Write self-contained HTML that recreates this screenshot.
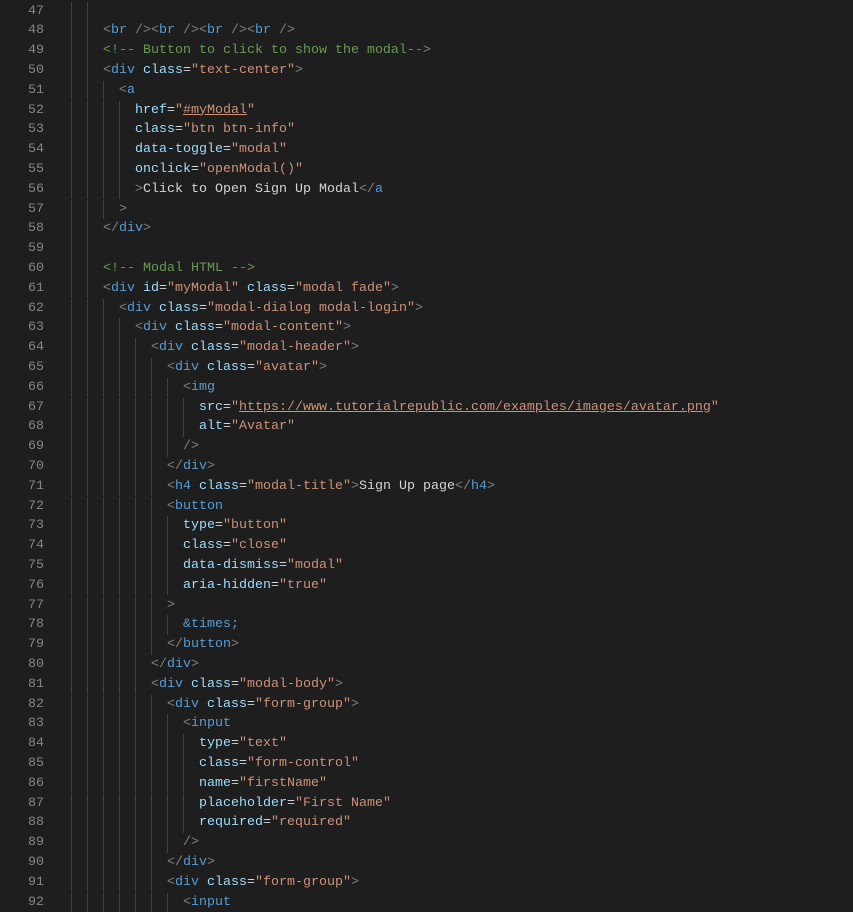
<!DOCTYPE html>
<html><head><meta charset="utf-8"><style>
body{margin:0;background:#1e1e1e;width:853px;height:912px;overflow:hidden;font-family:"Liberation Mono",monospace;font-size:13.33px}
#w{position:absolute;left:0;top:1.5px;width:853px}
.l{position:absolute;left:0;height:19.8px;line-height:19.8px;white-space:pre;width:853px}
.n{position:absolute;right:809px;color:#858585;text-align:right}
.c{position:absolute;left:71px;color:#d4d4d4}
.g{display:inline-block;height:19.8px;vertical-align:top;background:repeating-linear-gradient(to right,#404040 0 1px,transparent 1px 16px)}
.p{color:#808080}.t{color:#569cd6}.a{color:#9cdcfe}.s{color:#ce9178}.m{color:#6a9955}.u{text-decoration:underline}
</style></head><body><div id="w">
<div class="l" style="top:0px"><span class="n">47</span><span class="c"><span class="g" style="width:32px"></span></span></div>
<div class="l" style="top:19.8px"><span class="n">48</span><span class="c"><span class="g" style="width:32px"></span><span class="p">&lt;</span><span class="t">br</span> <span class="p">/&gt;&lt;</span><span class="t">br</span> <span class="p">/&gt;&lt;</span><span class="t">br</span> <span class="p">/&gt;&lt;</span><span class="t">br</span> <span class="p">/&gt;</span></span></div>
<div class="l" style="top:39.6px"><span class="n">49</span><span class="c"><span class="g" style="width:32px"></span><span class="m">&lt;!-- Button to click to show the modal--&gt;</span></span></div>
<div class="l" style="top:59.4px"><span class="n">50</span><span class="c"><span class="g" style="width:32px"></span><span class="p">&lt;</span><span class="t">div</span> <span class="a">class</span>=<span class="s">"text-center"</span><span class="p">&gt;</span></span></div>
<div class="l" style="top:79.2px"><span class="n">51</span><span class="c"><span class="g" style="width:48px"></span><span class="p">&lt;</span><span class="t">a</span></span></div>
<div class="l" style="top:99px"><span class="n">52</span><span class="c"><span class="g" style="width:64px"></span><span class="a">href</span>=<span class="s">"<span class="u">#myModal</span>"</span></span></div>
<div class="l" style="top:118.8px"><span class="n">53</span><span class="c"><span class="g" style="width:64px"></span><span class="a">class</span>=<span class="s">"btn btn-info"</span></span></div>
<div class="l" style="top:138.6px"><span class="n">54</span><span class="c"><span class="g" style="width:64px"></span><span class="a">data-toggle</span>=<span class="s">"modal"</span></span></div>
<div class="l" style="top:158.4px"><span class="n">55</span><span class="c"><span class="g" style="width:64px"></span><span class="a">onclick</span>=<span class="s">"openModal()"</span></span></div>
<div class="l" style="top:178.2px"><span class="n">56</span><span class="c"><span class="g" style="width:64px"></span><span class="p">&gt;</span>Click to Open Sign Up Modal<span class="p">&lt;/</span><span class="t">a</span></span></div>
<div class="l" style="top:198px"><span class="n">57</span><span class="c"><span class="g" style="width:48px"></span><span class="p">&gt;</span></span></div>
<div class="l" style="top:217.8px"><span class="n">58</span><span class="c"><span class="g" style="width:32px"></span><span class="p">&lt;/</span><span class="t">div</span><span class="p">&gt;</span></span></div>
<div class="l" style="top:237.6px"><span class="n">59</span><span class="c"><span class="g" style="width:32px"></span></span></div>
<div class="l" style="top:257.4px"><span class="n">60</span><span class="c"><span class="g" style="width:32px"></span><span class="m">&lt;!-- Modal HTML --&gt;</span></span></div>
<div class="l" style="top:277.2px"><span class="n">61</span><span class="c"><span class="g" style="width:32px"></span><span class="p">&lt;</span><span class="t">div</span> <span class="a">id</span>=<span class="s">"myModal"</span> <span class="a">class</span>=<span class="s">"modal fade"</span><span class="p">&gt;</span></span></div>
<div class="l" style="top:297px"><span class="n">62</span><span class="c"><span class="g" style="width:48px"></span><span class="p">&lt;</span><span class="t">div</span> <span class="a">class</span>=<span class="s">"modal-dialog modal-login"</span><span class="p">&gt;</span></span></div>
<div class="l" style="top:316.8px"><span class="n">63</span><span class="c"><span class="g" style="width:64px"></span><span class="p">&lt;</span><span class="t">div</span> <span class="a">class</span>=<span class="s">"modal-content"</span><span class="p">&gt;</span></span></div>
<div class="l" style="top:336.6px"><span class="n">64</span><span class="c"><span class="g" style="width:80px"></span><span class="p">&lt;</span><span class="t">div</span> <span class="a">class</span>=<span class="s">"modal-header"</span><span class="p">&gt;</span></span></div>
<div class="l" style="top:356.4px"><span class="n">65</span><span class="c"><span class="g" style="width:96px"></span><span class="p">&lt;</span><span class="t">div</span> <span class="a">class</span>=<span class="s">"avatar"</span><span class="p">&gt;</span></span></div>
<div class="l" style="top:376.2px"><span class="n">66</span><span class="c"><span class="g" style="width:112px"></span><span class="p">&lt;</span><span class="t">img</span></span></div>
<div class="l" style="top:396px"><span class="n">67</span><span class="c"><span class="g" style="width:128px"></span><span class="a">src</span>=<span class="s">"<span class="u">https://www.tutorialrepublic.com/examples/images/avatar.png</span>"</span></span></div>
<div class="l" style="top:415.8px"><span class="n">68</span><span class="c"><span class="g" style="width:128px"></span><span class="a">alt</span>=<span class="s">"Avatar"</span></span></div>
<div class="l" style="top:435.6px"><span class="n">69</span><span class="c"><span class="g" style="width:112px"></span><span class="p">/&gt;</span></span></div>
<div class="l" style="top:455.4px"><span class="n">70</span><span class="c"><span class="g" style="width:96px"></span><span class="p">&lt;/</span><span class="t">div</span><span class="p">&gt;</span></span></div>
<div class="l" style="top:475.2px"><span class="n">71</span><span class="c"><span class="g" style="width:96px"></span><span class="p">&lt;</span><span class="t">h4</span> <span class="a">class</span>=<span class="s">"modal-title"</span><span class="p">&gt;</span>Sign Up page<span class="p">&lt;/</span><span class="t">h4</span><span class="p">&gt;</span></span></div>
<div class="l" style="top:495px"><span class="n">72</span><span class="c"><span class="g" style="width:96px"></span><span class="p">&lt;</span><span class="t">button</span></span></div>
<div class="l" style="top:514.8px"><span class="n">73</span><span class="c"><span class="g" style="width:112px"></span><span class="a">type</span>=<span class="s">"button"</span></span></div>
<div class="l" style="top:534.6px"><span class="n">74</span><span class="c"><span class="g" style="width:112px"></span><span class="a">class</span>=<span class="s">"close"</span></span></div>
<div class="l" style="top:554.4px"><span class="n">75</span><span class="c"><span class="g" style="width:112px"></span><span class="a">data-dismiss</span>=<span class="s">"modal"</span></span></div>
<div class="l" style="top:574.2px"><span class="n">76</span><span class="c"><span class="g" style="width:112px"></span><span class="a">aria-hidden</span>=<span class="s">"true"</span></span></div>
<div class="l" style="top:594px"><span class="n">77</span><span class="c"><span class="g" style="width:96px"></span><span class="p">&gt;</span></span></div>
<div class="l" style="top:613.8px"><span class="n">78</span><span class="c"><span class="g" style="width:112px"></span><span class="t">&amp;times;</span></span></div>
<div class="l" style="top:633.6px"><span class="n">79</span><span class="c"><span class="g" style="width:96px"></span><span class="p">&lt;/</span><span class="t">button</span><span class="p">&gt;</span></span></div>
<div class="l" style="top:653.4px"><span class="n">80</span><span class="c"><span class="g" style="width:80px"></span><span class="p">&lt;/</span><span class="t">div</span><span class="p">&gt;</span></span></div>
<div class="l" style="top:673.2px"><span class="n">81</span><span class="c"><span class="g" style="width:80px"></span><span class="p">&lt;</span><span class="t">div</span> <span class="a">class</span>=<span class="s">"modal-body"</span><span class="p">&gt;</span></span></div>
<div class="l" style="top:693px"><span class="n">82</span><span class="c"><span class="g" style="width:96px"></span><span class="p">&lt;</span><span class="t">div</span> <span class="a">class</span>=<span class="s">"form-group"</span><span class="p">&gt;</span></span></div>
<div class="l" style="top:712.8px"><span class="n">83</span><span class="c"><span class="g" style="width:112px"></span><span class="p">&lt;</span><span class="t">input</span></span></div>
<div class="l" style="top:732.6px"><span class="n">84</span><span class="c"><span class="g" style="width:128px"></span><span class="a">type</span>=<span class="s">"text"</span></span></div>
<div class="l" style="top:752.4px"><span class="n">85</span><span class="c"><span class="g" style="width:128px"></span><span class="a">class</span>=<span class="s">"form-control"</span></span></div>
<div class="l" style="top:772.2px"><span class="n">86</span><span class="c"><span class="g" style="width:128px"></span><span class="a">name</span>=<span class="s">"firstName"</span></span></div>
<div class="l" style="top:792px"><span class="n">87</span><span class="c"><span class="g" style="width:128px"></span><span class="a">placeholder</span>=<span class="s">"First Name"</span></span></div>
<div class="l" style="top:811.8px"><span class="n">88</span><span class="c"><span class="g" style="width:128px"></span><span class="a">required</span>=<span class="s">"required"</span></span></div>
<div class="l" style="top:831.6px"><span class="n">89</span><span class="c"><span class="g" style="width:112px"></span><span class="p">/&gt;</span></span></div>
<div class="l" style="top:851.4px"><span class="n">90</span><span class="c"><span class="g" style="width:96px"></span><span class="p">&lt;/</span><span class="t">div</span><span class="p">&gt;</span></span></div>
<div class="l" style="top:871.2px"><span class="n">91</span><span class="c"><span class="g" style="width:96px"></span><span class="p">&lt;</span><span class="t">div</span> <span class="a">class</span>=<span class="s">"form-group"</span><span class="p">&gt;</span></span></div>
<div class="l" style="top:891px"><span class="n">92</span><span class="c"><span class="g" style="width:112px"></span><span class="p">&lt;</span><span class="t">input</span></span></div>
</div></body></html>
